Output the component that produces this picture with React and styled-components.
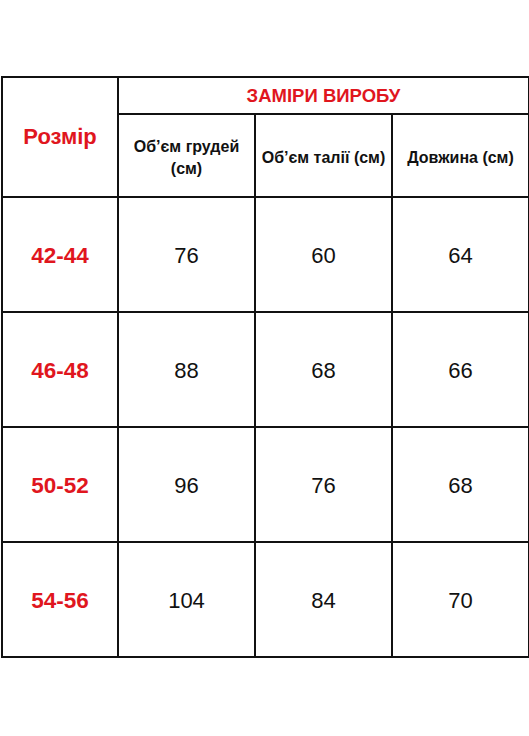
import React from "react";
import styled, { createGlobalStyle } from "styled-components";

const GlobalStyle = createGlobalStyle`
    html, body{
        margin: 0;
        padding: 0;
        background: #ffffff;
    }
    body{
        font-family: "Liberation Sans", Arial, sans-serif;
    }
`;

const Page = styled.div`
    width: 529px;
    height: 736px;
    padding: 76px 0 0 1px;
    box-sizing: border-box;
`;

const Table = styled.table`
    border-collapse: collapse;
    table-layout: fixed;
    width: 527px;
    color: #111;

    td, th{
        border: 2px solid #111;
        text-align: center;
        vertical-align: middle;
        padding: 0;
    }
`;

const SizeHead = styled.th`
    color: #e0161e;
    font-size: 22px;
    font-weight: bold;
    padding-bottom: 1px !important;
`;

const GroupHead = styled.th`
    height: 35px;
    color: #e0161e;
    font-size: 18.5px;
    font-weight: bold;
`;

const SubHead = styled.th`
    height: 77px;
    font-size: 16px;
    font-weight: bold;
    line-height: 22px;
    padding-top: 4px !important;
`;

const Row = styled.tr`
    height: 115px;
`;

const SizeCell = styled.td`
    color: #e0161e;
    font-size: 22.5px;
    font-weight: bold;
    padding-top: 3px !important;
`;

const ValueCell = styled.td`
    font-size: 22px;
    padding-top: 3px !important;
`;

const rows = [
    { size: "42-44", chest: 76, waist: 60, length: 64 },
    { size: "46-48", chest: 88, waist: 68, length: 66 },
    { size: "50-52", chest: 96, waist: 76, length: 68 },
    { size: "54-56", chest: 104, waist: 84, length: 70 },
];

const App = () => {
    return (
        <Page>
            <GlobalStyle />
            <Table>
                <colgroup>
                    <col style={{ width: 116 }} />
                    <col style={{ width: 137 }} />
                    <col style={{ width: 137 }} />
                    <col style={{ width: 137 }} />
                </colgroup>
                <thead>
                    <tr>
                        <SizeHead rowSpan={2}>Розмір</SizeHead>
                        <GroupHead colSpan={3}>ЗАМІРИ ВИРОБУ</GroupHead>
                    </tr>
                    <tr>
                        <SubHead>Об’єм грудей<br />(см)</SubHead>
                        <SubHead>Об’єм талії (см)</SubHead>
                        <SubHead>Довжина (см)</SubHead>
                    </tr>
                </thead>
                <tbody>
                    {rows.map((r) => (
                        <Row key={r.size}>
                            <SizeCell>{r.size}</SizeCell>
                            <ValueCell>{r.chest}</ValueCell>
                            <ValueCell>{r.waist}</ValueCell>
                            <ValueCell>{r.length}</ValueCell>
                        </Row>
                    ))}
                </tbody>
            </Table>
        </Page>
    );
};

export default App;
